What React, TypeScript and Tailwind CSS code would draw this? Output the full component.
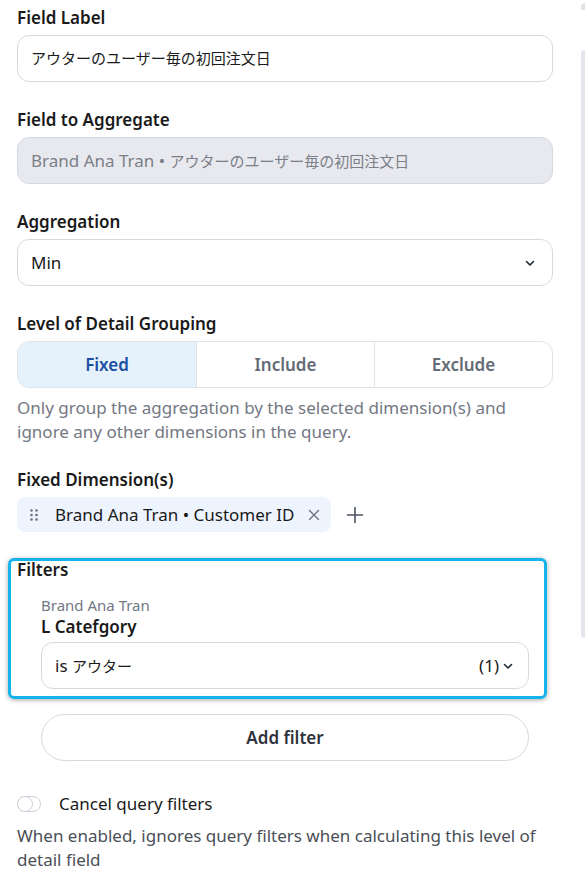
import React from 'react';

const font = { fontFamily: '"Noto Sans", "Noto Sans CJK JP", sans-serif' };

function Chevron() {
  return (
    <svg className="w-3 h-3 text-gray-800" viewBox="0 0 12 12" fill="none" stroke="currentColor" strokeWidth={1.6} strokeLinecap="round" strokeLinejoin="round">
      <path d="M2.5 4.5 6 8l3.5-3.5" />
    </svg>
  );
}

function DragDots() {
  return (
    <svg className="w-[10px] h-[14px] text-gray-500" viewBox="0 0 10 14" fill="currentColor">
      <circle cx="2.5" cy="2.5" r="1.3" />
      <circle cx="7.5" cy="2.5" r="1.3" />
      <circle cx="2.5" cy="7" r="1.3" />
      <circle cx="7.5" cy="7" r="1.3" />
      <circle cx="2.5" cy="11.5" r="1.3" />
      <circle cx="7.5" cy="11.5" r="1.3" />
    </svg>
  );
}

// Japanese glyphs in the reference run a little narrower than the latin text
function Jp({ children }: { children: React.ReactNode }) {
  return <span className="text-[15px]">{children}</span>;
}

function Label({ children }: { children: React.ReactNode }) {
  return <div className="text-[17px] leading-6 font-semibold text-[#1a1a1a] mb-[5px]">{children}</div>;
}

export default function App() {
  return (
    <div className="relative w-[585px] h-[888px] bg-white overflow-hidden text-[17px]" style={font}>
      {/* scrollbar */}
      <div className="absolute right-0 top-[3px] w-[4px] h-[7px] bg-[#dfe3ea] rounded-tl-full" />
      <div className="absolute right-0 top-[50px] w-[4px] h-[588px] bg-[#e3e6ec] rounded-tl-[3px] rounded-bl-[3px]" />

      <div className="pl-[17px] pr-[32px] pt-[6px] flex flex-col">
        <Label>Field Label</Label>
        <div className="h-[47px] rounded-xl border border-[#d6d9e0] flex items-center px-[13px] text-[#1a1a1a]">
          <Jp>アウターのユーザー毎の初回注文日</Jp>
        </div>

        <div className="mt-[26px]">
          <Label>Field to Aggregate</Label>
          <div className="h-[47px] rounded-xl border border-[#d6d9e0] bg-[#e8e9ee] flex items-center px-[13px] text-[#7b7f88]">
            <span>
              Brand Ana Tran • <Jp>アウターのユーザー毎の初回注文日</Jp>
            </span>
          </div>
        </div>

        <div className="mt-[26px]">
          <Label>Aggregation</Label>
          <div className="h-[47px] rounded-xl border border-[#d6d9e0] flex items-center justify-between pl-[13px] pr-[16px] text-[#1a1a1a]">
            <span>Min</span>
            <Chevron />
          </div>
        </div>

        <div className="mt-[26px]">
          <Label>Level of Detail Grouping</Label>
          <div className="h-[47px] rounded-xl border border-[#dfe2e8] grid grid-cols-3 overflow-hidden font-semibold">
            <div className="bg-[#e5f2fc] text-[#1d4ea3] flex items-center justify-center">Fixed</div>
            <div className="border-l border-[#dfe2e8] text-[#646a76] flex items-center justify-center">Include</div>
            <div className="border-l border-[#dfe2e8] text-[#646a76] flex items-center justify-center">Exclude</div>
          </div>
          <p className="mt-[8px] leading-6 text-[#737883] pr-[20px]">
            Only group the aggregation by the selected dimension(s) and ignore any other dimensions in the query.
          </p>
        </div>

        <div className="mt-[24px]">
          <Label>Fixed Dimension(s)</Label>
          <div className="flex items-center gap-[14px]">
            <div className="h-[35px] rounded-lg bg-[#eef4fd] flex items-center pl-[12px] pr-[10px] text-[#1a1a1a]">
              <DragDots />
              <span className="ml-[16px]">Brand Ana Tran • Customer ID</span>
              <svg className="ml-[13px] w-[14px] h-[14px] text-gray-500" viewBox="0 0 14 14" fill="none" stroke="currentColor" strokeWidth={1.4} strokeLinecap="round">
                <path d="M2.5 2.5l9 9M11.5 2.5l-9 9" />
              </svg>
            </div>
            <svg className="w-[20px] h-[20px] text-gray-600" viewBox="0 0 20 20" fill="none" stroke="currentColor" strokeWidth={1.6} strokeLinecap="round">
              <path d="M10 2.5v15M2.5 10h15" />
            </svg>
          </div>
        </div>

        <div className="mt-[26px] relative">
          {/* highlight annotation */}
          <div className="absolute left-[-9px] top-0 w-[539px] h-[141px] rounded-[6px] border-[3px] border-[#16b2ea] shadow-[0_1px_5px_rgba(0,0,0,0.35)] pointer-events-none" />
          <div className="leading-6 font-semibold text-[#1a1a1a]">Filters</div>
          <div className="pl-[24px] pr-[24px] mt-[13px]">
            <div className="text-[15px] leading-5 text-[#737883]">Brand Ana Tran</div>
            <div className="leading-6 font-semibold text-[#1a1a1a]">L Catefgory</div>
            <div className="mt-[3px] h-[47px] rounded-xl border border-[#d6d9e0] flex items-center justify-between pl-[13px] pr-[14px] text-[#1a1a1a]">
              <span>
                is <Jp>アウター</Jp>
              </span>
              <span className="flex items-center gap-[3px]">
                (1)
                <Chevron />
              </span>
            </div>
            <div className="mt-[25px] h-[47px] rounded-full border border-[#d6d9e0] flex items-center justify-center font-semibold text-[#2f333b]">
              Add filter
            </div>
          </div>
        </div>

        <div className="mt-[31px] flex items-center gap-[18px]">
          <div className="relative w-[24px] h-[16px] rounded-full border border-[#cdd2da] bg-white">
            <div className="absolute left-[-1px] top-[-1px] w-[16px] h-[16px] rounded-full border border-[#cdd2da] bg-white" />
          </div>
          <span className="leading-6 text-[#1a1a1a]">Cancel query filters</span>
        </div>
        <p className="mt-[8px] leading-6 text-[#4b4f57]">
          When enabled, ignores query filters when calculating this level of detail field
        </p>
      </div>
    </div>
  );
}
